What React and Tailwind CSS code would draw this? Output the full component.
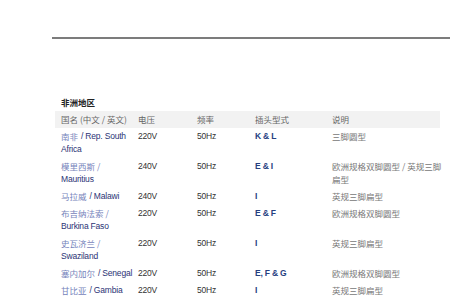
import React from 'react'

const rows = [
  { zh: '南非', en: ['Rep. South', 'Africa'], v: '220V', plug: 'K & L', desc: ['三脚圆型'] },
  { zh: '模里西斯 /', en: ['', 'Mauritius'], v: '240V', plug: 'E & I', desc: ['欧洲规格双脚圆型 / 英规三脚', '扁型'] },
  { zh: '马拉威', en: ['Malawi'], v: '240V', plug: 'I', desc: ['英规三脚扁型'] },
  { zh: '布吉纳法索 /', en: ['', 'Burkina Faso'], v: '220V', plug: 'E & F', desc: ['欧洲规格双脚圆型'] },
  { zh: '史瓦济兰 /', en: ['', 'Swaziland'], v: '220V', plug: 'I', desc: ['英规三脚扁型'] },
  { zh: '塞内加尔', en: ['Senegal'], v: '220V', plug: 'E, F & G', desc: ['欧洲规格双脚圆型'] },
  { zh: '甘比亚', en: ['Gambia'], v: '220V', plug: 'I', desc: ['英规三脚扁型'] },
]

const line = 'h-[13px] leading-[13px] whitespace-nowrap flex items-center'
const zhCls = "font-['Noto_Sans_CJK_SC',sans-serif] text-[8.5px]"
const enCls = "font-['Liberation_Sans',Arial,sans-serif] text-[8.5px] tracking-[-0.2px]"

function Country({ r }) {
  const split = r.en[0] === ''
  return (
    <div className="flex flex-col">
      <div className={line}>
        <span className={`${zhCls} text-[#7683bb]`}>{r.zh}</span>
        {!split && <span className={`${enCls} text-[#2b3375] ml-[3px]`}>/ {r.en[0]}</span>}
      </div>
      {r.en.length > 1 && <div className={`${line} ${enCls} text-[#2b3375]`}>{r.en[1]}</div>}
    </div>
  )
}

function App() {
  return (
    <div className="w-[450px] h-[300px] overflow-hidden bg-white">
      <div className="mt-[37px] ml-[52px] h-[2px] bg-[#7c7c7c]"></div>
      <div className={`ml-[61px] mt-[57px] ${line} ${zhCls} font-bold text-[#222]`}>非洲地区</div>
      <div className="ml-[55px] w-[385px] mt-[2px]">
        <div className={`grid grid-cols-[77px_59px_58px_77px_1fr] bg-[#f2f2f2] py-[2px] text-[#666] ${zhCls}`}>
          <div className={`pl-[6px] ${line}`}>国名 (中文 / 英文)</div>
          <div className={`pl-[6px] ${line}`}>电压</div>
          <div className={`pl-[6px] ${line}`}>频率</div>
          <div className={`pl-[6px] ${line}`}>插头型式</div>
          <div className={`pl-[6px] ${line}`}>说明</div>
        </div>
        {rows.map((r, i) => (
          <div key={i} className="grid grid-cols-[77px_59px_58px_77px_1fr] py-[2px]">
            <div className="pl-[6px]"><Country r={r} /></div>
            <div className={`pl-[6px] ${line} ${enCls} text-[#333]`}>{r.v}</div>
            <div className={`pl-[6px] ${line} ${enCls} text-[#333]`}>50Hz</div>
            <div className={`pl-[6px] ${line} ${enCls} font-bold text-[#26407f]`}>{r.plug}</div>
            <div className={`pl-[6px] flex flex-col ${zhCls} text-[#777]`}>
              {r.desc.map((d, j) => <div key={j} className={line}>{d}</div>)}
            </div>
          </div>
        ))}
      </div>
    </div>
  )
}

export default App
